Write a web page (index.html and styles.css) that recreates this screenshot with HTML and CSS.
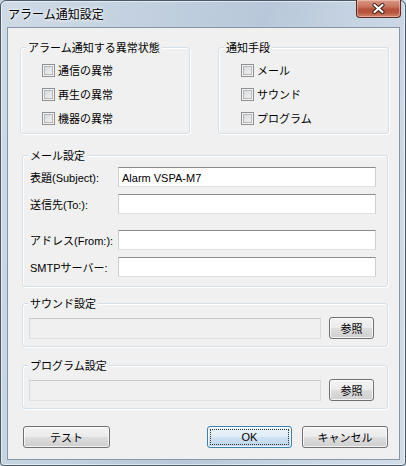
FILE: index.html
```html
<!DOCTYPE html>
<html lang="ja">
<head>
<meta charset="utf-8">
<title>アラーム通知設定</title>
<link rel="stylesheet" href="styles.css">
</head>
<body>
<div class="window">
  <div class="titlebar">
    <span class="title">アラーム通知設定</span>
    <button class="close" aria-label="閉じる">
      <svg width="13" height="11" viewBox="0 0 13 11"><path d="M2.5 2 L10.5 9 M10.5 2 L2.5 9" stroke="#3a1b14" stroke-width="4" stroke-linecap="round"/><path d="M2.5 2 L10.5 9 M10.5 2 L2.5 9" stroke="#fff" stroke-width="2.2" stroke-linecap="round"/></svg>
    </button>
  </div>
  <div class="client">
    <div class="top-row">
      <section class="group g-alarm">
        <h2 class="group-title">アラーム通知する異常状態</h2>
        <div class="checks">
          <label class="check"><input type="checkbox"><span>通信の異常</span></label>
          <label class="check"><input type="checkbox"><span>再生の異常</span></label>
          <label class="check"><input type="checkbox"><span>機器の異常</span></label>
        </div>
      </section>
      <section class="group g-method">
        <h2 class="group-title">通知手段</h2>
        <div class="checks">
          <label class="check"><input type="checkbox"><span>メール</span></label>
          <label class="check"><input type="checkbox"><span>サウンド</span></label>
          <label class="check"><input type="checkbox"><span>プログラム</span></label>
        </div>
      </section>
    </div>
    <section class="group g-mail">
      <h2 class="group-title">メール設定</h2>
      <div class="field f1"><label>表題(Subject):</label><input class="text" type="text" value="Alarm VSPA-M7"></div>
      <div class="field f2"><label>送信先(To:):</label><input class="text" type="text"></div>
      <div class="field f3"><label>アドレス(From:):</label><input class="text" type="text"></div>
      <div class="field f4"><label>SMTPサーバー:</label><input class="text" type="text"></div>
    </section>
    <section class="group g-file g-sound">
      <h2 class="group-title">サウンド設定</h2>
      <div class="file-row"><input class="text path" type="text" disabled><button class="btn browse">参照</button></div>
    </section>
    <section class="group g-file g-program">
      <h2 class="group-title">プログラム設定</h2>
      <div class="file-row"><input class="text path" type="text" disabled><button class="btn browse">参照</button></div>
    </section>
    <div class="actions">
      <button class="btn test">テスト</button>
      <span class="spacer"></span>
      <button class="btn default"><span class="focus">OK</span></button>
      <button class="btn cancel">キャンセル</button>
    </div>
  </div>
</div>
</body>
</html>
```

FILE: styles.css
```css
* { box-sizing: border-box; }
html, body { margin: 0; padding: 0; background: #c9d6e4; }
body {
  font-family: "Liberation Sans", "Noto Sans CJK JP", sans-serif;
  font-size: 11px;
  color: #000;
}
.window {
  width: 406px;
  height: 466px;
  border: 1px solid #4b5868;
  border-radius: 6px 6px 4px 4px;
  background: linear-gradient(100deg, #cfdae6 0%, #c2d0df 30%, #b8c8da 55%, #c7d4e2 75%, #d3dde8 100%);
  padding: 0 5px 5px 6px;
  display: flex;
  flex-direction: column;
  box-shadow: inset 0 0 0 1px rgba(255,255,255,0.55);
}
.titlebar {
  height: 26px;
  display: flex;
  justify-content: space-between;
  align-items: flex-start;
  flex: none;
}
.title {
  margin: 5px 0 0 1px;
  font-family: "Noto Sans CJK JP", sans-serif;
  font-size: 12px;
  line-height: 16px;
  color: #000;
  text-shadow: 0 0 5px #fff, 0 0 3px #fff;
}
.close {
  width: 45px;
  height: 18px;
  margin: -1px -1px 0 0;
  padding: 0;
  border: 1px solid #5a2b22;
  border-top: none;
  border-radius: 0 0 4px 4px;
  background: linear-gradient(#d99a86 0%, #c8735d 40%, #b5503a 55%, #b8573f 75%, #d4876c 100%);
  box-shadow: inset 0 0 0 1px rgba(255,220,210,0.45);
  display: flex;
  align-items: center;
  justify-content: center;
}
.close svg { display: block; }
.client {
  flex: 1;
  border: 1px solid #8596aa;
  background: #f0f0f0;
  display: flex;
  flex-direction: column;
}
.top-row {
  display: flex;
  gap: 28px;
  margin: 19px 0 0 12px;
}
.group {
  border: 1px solid #d5dfe5;
  border-radius: 3px;
  box-shadow: inset 1px 1px 0 #fff, 1px 1px 0 #fff;
  flex: none;
}
.group-title {
  margin: -8px 0 0 5px;
  padding: 0 2px;
  width: fit-content;
  background: #f0f0f0;
  font-size: 11px;
  line-height: 15px;
  font-weight: normal;
  font-family: "Noto Sans CJK JP", sans-serif;
}
.g-alarm { width: 170px; height: 87px; }
.g-method { width: 171px; height: 87px; }
.checks {
  display: flex;
  flex-direction: column;
  margin-top: 3px;
}
.g-alarm .checks { padding-left: 21px; }
.g-method .checks { padding-left: 22px; }
.check {
  height: 24px;
  display: flex;
  align-items: center;
  gap: 3px;
  font-family: "Noto Sans CJK JP", sans-serif;
}
.check input {
  appearance: none;
  -webkit-appearance: none;
  width: 13px;
  height: 13px;
  margin: 0;
  border: 1px solid #8e8f8f;
  background: linear-gradient(135deg, #cfd2d6 0%, #e6e7e9 55%, #f6f6f6 100%);
  box-shadow: inset 0 0 0 1px #f4f4f4, inset 0 0 0 2px #b4b7bb;
}
.g-mail {
  width: 366px;
  height: 132px;
  margin: 21px 0 0 14px;
  padding: 0 11px 0 7px;
}
.g-mail .group-title { margin-left: -2px; }
.field {
  display: flex;
  align-items: center;
  height: 20px;
}
.field label { width: 88px; white-space: nowrap; }
.f1 { margin-top: 4px; }
.f2 { margin-top: 7px; }
.f3 { margin-top: 16px; }
.f4 { margin-top: 7px; }
.text {
  width: 258px;
  height: 20px;
  margin: 0;
  padding: 1px 3px 0;
  border: 1px solid;
  border-color: #8a8a8a #cfcfcf #e0e0e0 #cfcfcf;
  background: #fff;
  font-family: "Liberation Sans", "Noto Sans CJK JP", sans-serif;
  font-size: 11px;
  color: #000;
  outline: none;
}
.g-file {
  width: 366px;
  height: 44px;
  margin-left: 14px;
  padding: 0 0 0 6px;
}
.g-file .group-title { margin-left: -1px; }
.g-sound { margin-top: 16px; }
.g-program { margin-top: 18px; }
.file-row {
  display: flex;
  align-items: center;
  gap: 8px;
  margin-top: 6px;
}
.text.path {
  width: 292px;
  height: 21px;
  background: #f0f0f0;
  border-color: #c9c9c9 #dadada #e2e2e2 #dadada;
}
.btn {
  height: 22px;
  margin: 0;
  padding: 0;
  border: 1px solid #707070;
  border-radius: 3px;
  background: linear-gradient(#f3f3f3 0%, #ebebeb 48%, #dddddd 52%, #cfcfcf 100%);
  box-shadow: inset 0 0 0 1px rgba(255,255,255,0.75);
  font-family: "Noto Sans CJK JP", sans-serif;
  font-size: 11px;
  color: #000;
  flex: none;
}
.browse { width: 45px; height: 22px; }
.actions {
  display: flex;
  align-items: center;
  margin: 17px 11px 0 15px;
  gap: 10px;
}
.spacer { flex: 1; }
.test { width: 87px; }
.default {
  width: 85px;
  border-color: #3c7fb1;
  background: linear-gradient(#eaf3fa 0%, #e0edf7 48%, #cfe2f1 52%, #bcd6ec 100%);
  padding: 2px;
}
.cancel { width: 86px; }
.focus {
  display: flex;
  align-items: center;
  justify-content: center;
  height: 100%;
  outline: 1px dotted #333;
  outline-offset: -1px;
  font-family: "Liberation Sans", sans-serif;
}
```
